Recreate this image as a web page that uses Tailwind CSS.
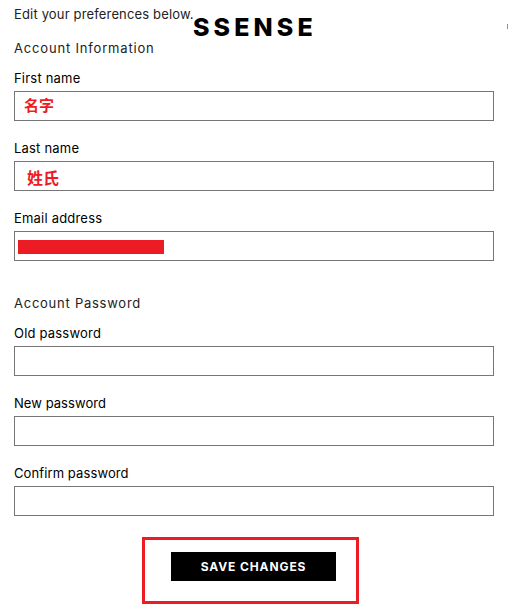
<!doctype html>
<html lang="en">
  <head>
    <meta charset="UTF-8" />
    <meta name="viewport" content="width=device-width, initial-scale=1.0" />
    <title>SSENSE - Account</title>
    <script src="https://cdn.jsdelivr.net/npm/@tailwindcss/browser@4"></script>
  </head>
  <body class="relative h-[612px] overflow-hidden bg-white px-3.5 font-['Inter',sans-serif] text-[13px] leading-5 text-[#222]">
    <h1 class="absolute left-[193px] top-3 text-[25px] leading-[30px] font-extrabold tracking-[4.1px] text-black">SSENSE</h1>
    <span class="absolute right-0 top-6 h-[5px] w-px bg-[#c08a2c]"></span>

    <p class="pt-1 tracking-[0.16px]">Edit your preferences below.</p>

    <form>
      <h2 class="mt-3.5 tracking-[0.82px]">Account Information</h2>
      <div class="mt-2.5 h-[60px]">
        <label for="first" class="block h-[23px] text-black tracking-[0.2px]">First name</label>
        <div id="first" class="h-[30px] border border-[#767676] pl-[9px] pt-[3px] font-['Noto_Sans_CJK_SC',sans-serif] text-[15px] font-bold text-[#ed1c24]">名字</div>
      </div>
      <div class="mt-2.5 h-[60px]">
        <label for="last" class="block h-[23px] text-black tracking-[0.2px]">Last name</label>
        <div id="last" class="h-[30px] border border-[#767676] pl-3 pt-[5px] font-['Noto_Sans_CJK_SC',sans-serif] text-[16px] leading-5 font-bold text-[#ed1c24]">姓氏</div>
      </div>
      <div class="mt-2.5 h-[60px]">
        <label for="email" class="block h-[23px] text-black tracking-[0.2px]">Email address</label>
        <div id="email" class="h-[30px] border border-[#767676] pl-[3px] pt-2">
          <div class="h-3.5 w-[146px] bg-[#ed1c24]"></div>
        </div>
      </div>

      <h2 class="mt-[25px] tracking-[0.75px]">Account Password</h2>
      <div class="mt-2.5 h-[60px]">
        <label for="old" class="block h-[23px] text-black tracking-[0.2px]">Old password</label>
        <input id="old" type="password" class="block h-[30px] w-full border border-[#767676]" />
      </div>
      <div class="mt-2.5 h-[60px]">
        <label for="new" class="block h-[23px] text-black tracking-[0.05px]">New password</label>
        <input id="new" type="password" class="block h-[30px] w-full border border-[#767676]" />
      </div>
      <div class="mt-2.5 h-[60px]">
        <label for="confirm" class="block h-[23px] text-black tracking-[0.1px]">Confirm password</label>
        <input id="confirm" type="password" class="block h-[30px] w-full border border-[#767676]" />
      </div>

      <div class="ml-32 mt-3.5 h-[67px] w-[217px] border-3 border-[#ed1c24] pl-[26px] pt-3">
        <button type="button" class="block h-[29px] w-[165px] bg-black text-[12px] font-bold tracking-[0.9px] text-white">SAVE CHANGES</button>
      </div>
    </form>
  </body>
</html>
